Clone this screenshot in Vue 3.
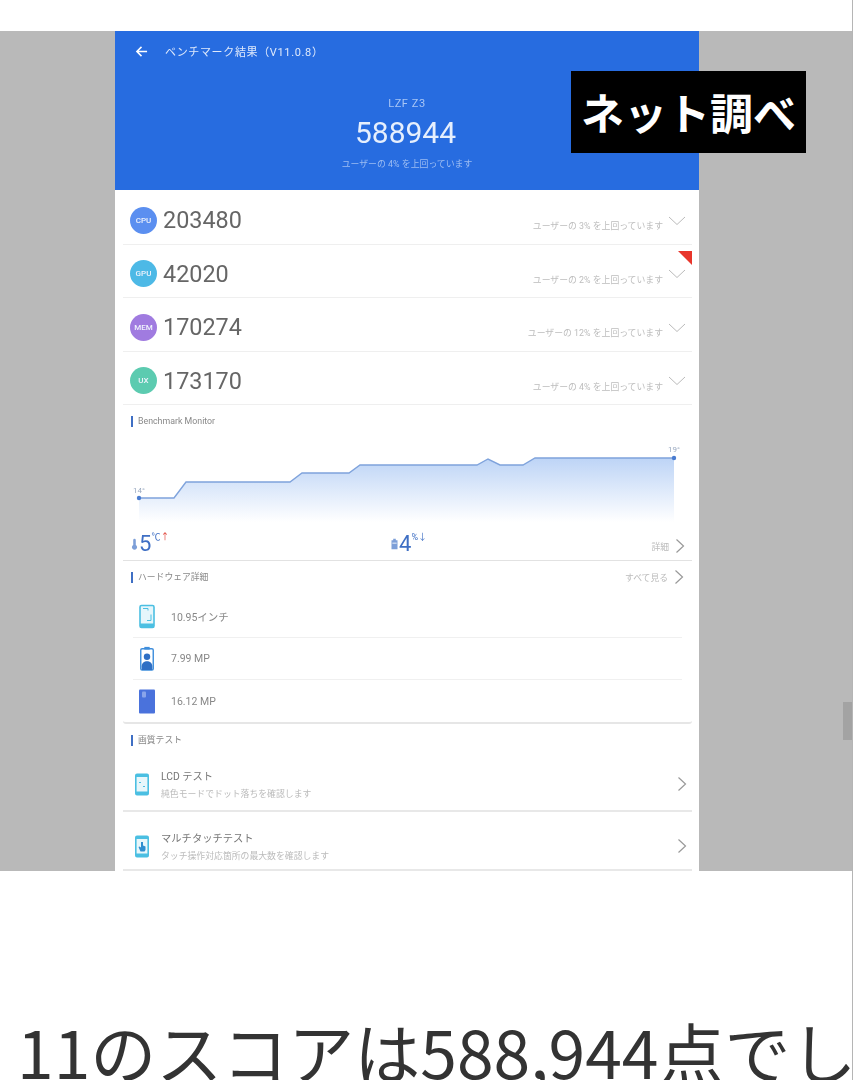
<template>
  <div class="page">
    <section class="stage">
      <div class="phone">
        <header class="head">
          <div class="bar">
            <svg class="back" viewBox="0 0 14 14"><path d="M13 7H2M7 2 2 7l5 5" /></svg>
            <span>ベンチマーク結果（V11.0.8）</span>
          </div>
          <div class="device">LZF Z3</div>
          <div class="total">588944</div>
          <div class="beat">ユーザーの 4% を上回っています</div>
        </header>

        <div class="scores">
          <div v-for="s in scores" :key="s.tag" class="score-row">
            <span class="badge" :style="{ background: s.color }">{{ s.tag }}</span>
            <span class="num">{{ s.value }}</span>
            <span class="rank">ユーザーの {{ s.pct }}% を上回っています</span>
            <svg class="down" viewBox="0 0 18 10"><path d="M1 1l8 7.5L17 1" /></svg>
            <i v-if="s.flag" class="flag" />
          </div>
        </div>

        <h3 class="sec first">Benchmark Monitor</h3>
        <div class="monitor">
          <svg class="chart" viewBox="0 0 569 100">
            <defs>
              <linearGradient id="fade" x1="0" y1="0" x2="0" y2="1">
                <stop offset="0" stop-color="#bdd4f6" />
                <stop offset="1" stop-color="#ffffff" />
              </linearGradient>
            </defs>
            <path :d="areaPath" fill="url(#fade)" />
            <path :d="linePath" fill="none" stroke="#7fa3dc" stroke-width="1.4" />
            <circle cx="16" cy="68" r="2.2" fill="#4a7cd0" />
            <circle cx="551" cy="28" r="2.2" fill="#4a7cd0" />
            <text x="10" y="63" class="temp">14°</text>
            <text x="545" y="22" class="temp">19°</text>
          </svg>
          <div class="stats">
            <div class="stat">
              <svg class="mini" viewBox="0 0 8 14"><path d="M4 1a1.500 1.500 0 0 1 1.500 1.500v5.600a3 3 0 1 1-3 0V2.500A1.500 1.500 0 0 1 4 1z" fill="#7d9fd8" /></svg>
              <b>5</b><sup>℃<em class="up">↑</em></sup>
            </div>
            <div class="stat mid">
              <svg class="mini" viewBox="0 0 8 14"><path d="M2.500 1h3v1.500H7.500V13H.5V2.500h2z" fill="#7d9fd8" /><path d="M1.500 6h5" stroke="#fff" /></svg>
              <b>4</b><sup>%<em class="dn">↓</em></sup>
            </div>
            <div class="more">
              詳細
              <svg class="next" viewBox="0 0 10 16"><path d="M1.500 1.500 8.500 8l-7 6.500" /></svg>
            </div>
          </div>
        </div>

        <div class="sec-line">
          <h3 class="sec">ハードウェア詳細</h3>
          <div class="more">
            すべて見る
            <svg class="next" viewBox="0 0 10 16"><path d="M1.500 1.500 8.500 8l-7 6.500" /></svg>
          </div>
        </div>
        <div class="hardware">
          <div class="hw-row">
            <svg class="hw-icon" viewBox="0 0 16 24">
              <rect x="1" y="1" width="14" height="22" rx="1.500" fill="#e6f6fb" stroke="#4bbfe2" stroke-width="1.600" />
              <rect x="1" y="19" width="14" height="4" fill="#4bbfe2" />
              <path d="M4 4h5v2M12 10v6H8" stroke="#4bbfe2" fill="none" />
            </svg>
            <span>10.95インチ</span>
          </div>
          <div class="hw-row">
            <svg class="hw-icon" viewBox="0 0 16 28">
              <rect x="1" y="3" width="14" height="24" rx="1.500" fill="#fff" stroke="#3f8edc" stroke-width="1.600" />
              <rect x="5" y="1" width="6" height="3" fill="#3f8edc" />
              <circle cx="8" cy="12" r="3.600" fill="#2f6fc4" />
              <path d="M2 23c0-4 3-6 6-6s6 2 6 6v4H2z" fill="#2f6fc4" />
            </svg>
            <span>7.99 MP</span>
          </div>
          <div class="hw-row">
            <svg class="hw-icon" viewBox="0 0 16 24">
              <rect x="0" y="0" width="16" height="24" rx="1" fill="#4a72dc" />
              <rect x="3" y="2" width="4" height="6" rx="1" fill="#8aa5ea" />
            </svg>
            <span>16.12 MP</span>
          </div>
        </div>

        <h3 class="sec third">画質テスト</h3>
        <div class="tests">
          <div v-for="t in tests" :key="t.title" class="test-row">
            <svg class="test-icon" viewBox="0 0 14 22">
              <rect x=".8" y=".8" width="12.400" height="20.400" rx="1.200" fill="#e8f7fb" stroke="#4bbfe2" stroke-width="1.600" />
              <rect x="1" y="1" width="12" height="2.500" fill="#4bbfe2" />
              <rect x="1" y="18" width="12" height="3" fill="#4bbfe2" />
              <path v-if="t.touch" d="M6 6.500h2v3.500l2.500 1v3.500l-1 1.500H5.500L3.500 11.500l1-.5L6 12z" fill="#2f8fd0" />
              <path v-else d="M4 9h2M8 13h2" stroke="#4bbfe2" fill="none" />
            </svg>
            <div class="test-text">
              <div class="test-title">{{ t.title }}</div>
              <div class="test-sub">{{ t.sub }}</div>
            </div>
            <svg class="next big" viewBox="0 0 10 16"><path d="M1.500 1.500 8.500 8l-7 6.500" /></svg>
          </div>
        </div>
      </div>
      <div class="stamp">ネット調べ</div>
      <i class="thumb" />
    </section>

    <p class="lead">11のスコアは588,944点でし</p>
  </div>
</template>

<script setup>
const scores = [
  { tag: 'CPU', value: '203480', pct: 3, color: '#5b8ff0' },
  { tag: 'GPU', value: '42020', pct: 2, color: '#4db9e6', flag: true },
  { tag: 'MEM', value: '170274', pct: 12, color: '#a07be0' },
  { tag: 'UX', value: '173170', pct: 4, color: '#5ccbb0' }
]

const tests = [
  { title: 'LCD テスト', sub: '純色モードでドット落ちを確認します' },
  { title: 'マルチタッチテスト', sub: 'タッチ操作対応箇所の最大数を確認します', touch: true }
]

const line = [[16, 68], [51, 68], [63, 52], [167, 52], [179, 43], [226, 43], [237, 35], [354, 35], [365, 29], [377, 35], [400, 35], [412, 28], [551, 28]]
const linePath = 'M' + line.map(p => p.join(' ')).join('L')
const areaPath = linePath + 'L551 92L16 92Z'
</script>

<style>
html, body { background: #fff; }
</style>

<style scoped>
.page {
  width: 853px;
  height: 1080px;
  overflow: hidden;
  background: #fff;
  box-sizing: border-box;
  padding-top: 31px;
  border-right: 1px solid #b5b5b5;
  font-family: Roboto, "Noto Sans CJK JP", sans-serif;
}
.stage {
  position: relative;
  height: 840px;
  background: #b9b9b9;
  padding-left: 115px;
  overflow: hidden;
}
.phone {
  width: 584px;
  height: 840px;
  background: #fff;
  overflow: hidden;
  filter: blur(0.6px);
}
.head {
  height: 159px;
  background: #276ce0;
  color: #fff;
  text-align: center;
  display: flex;
  flex-direction: column;
}
.bar {
  display: flex;
  align-items: center;
  gap: 17px;
  padding: 12px 0 0 20px;
  height: 16px;
  font-size: 11px;
  letter-spacing: .65px;
  color: #dfe9fb;
}
.back { width: 13px; height: 13px; }
.back path { fill: none; stroke: #fff; stroke-width: 1.600; }
.device { margin-top: 38px; font-size: 11px; letter-spacing: .6px; color: #a9c6f5; line-height: 14px; }
.total { margin: 5px 3px 0 0; font-size: 30px; line-height: 34px; color: #e6effd; }
.beat { margin-top: 8px; font-size: 8.900px; line-height: 12px; color: #9dbdf2; }

.scores { padding: 1px 7px 0 8px; }
.score-row {
  position: relative;
  height: 53.500px;
  box-sizing: border-box;
  padding: 6px 6px 0 7px;
  display: flex;
  align-items: center;
  border-bottom: 1px solid #efefef;
}
.badge {
  width: 27px;
  height: 27px;
  border-radius: 50%;
  color: #eef2fc;
  font-size: 8px;
  font-weight: 500;
  line-height: 27px;
  text-align: center;
}
.num { margin-left: 6px; font-size: 23.400px; color: #666; }
.rank { margin-left: auto; margin-top: 11px; font-size: 8.850px; color: #bdbdbd; }
.down { width: 18px; height: 10px; margin-left: 5px; margin-top: 1px; }
.down path { fill: none; stroke: #bbb; stroke-width: 1; }
.flag {
  position: absolute;
  right: 0;
  top: 6px;
  border-top: 14px solid #e8352b;
  border-left: 14px solid transparent;
}

.sec {
  margin: 0;
  padding-left: 5px;
  border-left: 2px solid #3f6fc4;
  font-size: 8.800px;
  line-height: 11px;
  font-weight: 400;
  color: #888;
}
.first { margin: 11px 0 0 16px; }
.third { margin: 11px 0 0 16px; }
.monitor { margin: 3px 7px 0 8px; border-bottom: 1px solid #e2e2e2; }
.chart { display: block; width: 569px; height: 100px; }
.temp { font-size: 8px; fill: #9aa9c0; font-family: Roboto, sans-serif; }
.stats { display: flex; align-items: center; height: 30px; padding: 0 7px 2px 8px; box-sizing: border-box; }
.stat { display: flex; align-items: center; color: #3f6fc4; width: 260px; }
.mini { width: 7px; height: 12px; margin-right: 1px; }
.stat b { font-weight: 400; font-size: 22px; line-height: 26px; }
.stat sup { font-size: 9px; line-height: 9px; align-self: flex-start; margin-top: 2px; font-style: normal; }
.stat em { font-style: normal; font-size: 9px; }
.up { color: #e0443a; }
.dn { color: #3f6fc4; }
.more {
  margin-left: auto;
  margin-top: 4px;
  display: flex;
  align-items: center;
  gap: 6px;
  font-size: 8.800px;
  color: #bbb;
}
.next { width: 10px; height: 16px; }
.next path { fill: none; stroke: #999; stroke-width: 1.200; }

.sec-line {
  display: flex;
  align-items: center;
  padding: 8px 15px 0 16px;
}
.sec-line .more { margin-top: 0; }
.hardware {
  margin: 11px 7px 0 8px;
  border-bottom: 2px solid #e6e6e6;
  border-radius: 0 0 3px 3px;
}
.hw-row {
  height: 42px;
  margin: 0 10px;
  padding-left: 6px;
  display: flex;
  align-items: center;
  font-size: 10.500px;
  color: #888;
  border-bottom: 1px solid #f0f0f0;
  box-sizing: border-box;
}
.hw-row:last-child { border-bottom: 0; }
.hw-icon { width: 16px; height: 25px; margin-right: 16px; }

.tests { margin: 9px 7px 0 8px; }
.test-row {
  height: 57px;
  box-sizing: border-box;
  padding: 4px 5px 0 12px;
  display: flex;
  align-items: center;
  border-bottom: 2px solid #e8e8e8;
}
.test-row:nth-child(2) { height: 59px; padding-top: 12px; }
.test-icon { width: 14px; height: 23px; margin-right: 12px; }
.test-title { font-size: 10.300px; line-height: 14px; color: #777; }
.test-sub { margin-top: 4px; font-size: 8.850px; line-height: 12px; color: #bbb; }
.next.big { margin: -2px 0 0 auto; }

.stamp {
  position: absolute;
  left: 571px;
  top: 40px;
  width: 235px;
  height: 82px;
  background: #000;
  color: #fff;
  font-family: "Noto Sans CJK JP", sans-serif;
  font-size: 43px;
  font-weight: 700;
  line-height: 80px;
  text-align: center;
  white-space: nowrap;
}
.thumb {
  position: absolute;
  right: 0;
  top: 671px;
  width: 9px;
  height: 38px;
  background: #a3a3a3;
}
.lead {
  margin: 134px 0 0 17px;
  font-family: "Noto Sans CJK JP", sans-serif;
  font-size: 66px;
  line-height: 90px;
  color: #333;
  white-space: nowrap;
  font-weight: 400;
}
</style>
